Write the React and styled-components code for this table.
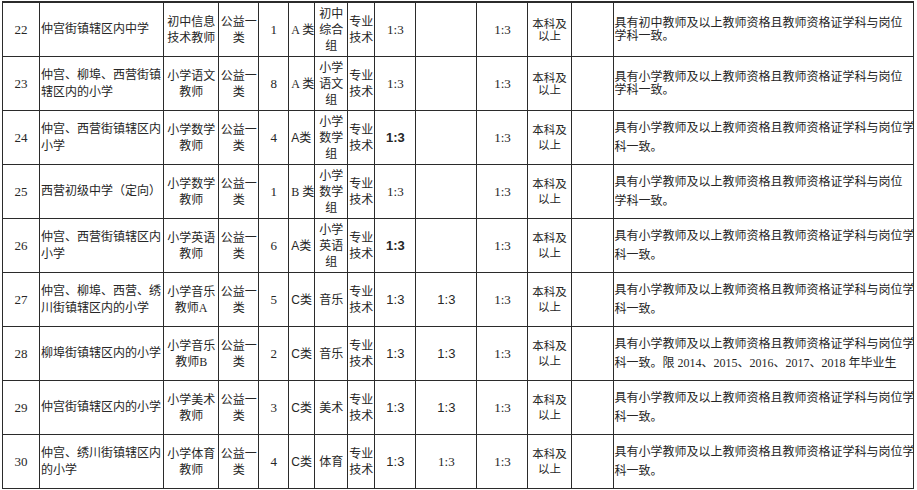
import React from 'react'
import styled, { createGlobalStyle } from 'styled-components'

const Global = createGlobalStyle`
  html, body { margin: 0; padding: 0; background: #fff; }
  body { font-family: "Liberation Serif", "Noto Sans CJK SC", serif; color: #222; }
`

const cols = [37, 124, 55, 40, 30, 26, 33, 27, 41, 61, 51, 43, 42, 300]

const rows = [
  { no: 22, unit: ['仲宫街镇辖区内中学'], post: ['初中信息', '技术教师'], count: '1', cls: 'A 类', group: ['初中', '综合', '组'], r1: '1:3', r2: '', r3: '1:3', req: ['具有初中教师及以上教师资格且教师资格证学科与岗位', '学科一致。'], tight: true },
  { no: 23, unit: ['仲宫、柳埠、西营街镇', '辖区内的小学'], post: ['小学语文', '教师'], count: '8', cls: 'A 类', group: ['小学', '语文', '组'], r1: '1:3', r2: '', r3: '1:3', req: ['具有小学教师及以上教师资格且教师资格证学科与岗位', '学科一致。'], tight: true },
  { no: 24, unit: ['仲宫、西营街镇辖区内', '小学'], post: ['小学数学', '教师'], count: '4', cls: 'A类', clsSans: true, group: ['小学', '数学', '组'], r1: '1:3', r1Sans: true, r1Bold: true, r2: '', r3: '1:3', req: ['具有小学教师及以上教师资格且教师资格证学科与岗位学', '科一致。'] },
  { no: 25, unit: ['西营初级中学（定向）'], post: ['小学数学', '教师'], count: '1', cls: 'B 类', group: ['小学', '数学', '组'], r1: '1:3', r2: '', r3: '1:3', req: ['具有小学教师及以上教师资格且教师资格证学科与岗位', '学科一致。'] },
  { no: 26, unit: ['仲宫、西营街镇辖区内', '小学'], post: ['小学英语', '教师'], count: '6', cls: 'A类', clsSans: true, group: ['小学', '英语', '组'], r1: '1:3', r1Sans: true, r1Bold: true, r2: '', r3: '1:3', req: ['具有小学教师及以上教师资格且教师资格证学科与岗位学', '科一致。'] },
  { no: 27, unit: ['仲宫、柳埠、西营、绣', '川街镇辖区内的小学'], post: ['小学音乐', '教师A'], count: '5', cls: 'C类', clsSans: true, group: ['音乐'], r1: '1:3', r1Sans: true, r2: '1:3', r2Sans: true, r3: '1:3', req: ['具有小学教师及以上教师资格且教师资格证学科与岗位学', '科一致。'] },
  { no: 28, unit: ['柳埠街镇辖区内的小学'], post: ['小学音乐', '教师B'], count: '2', cls: 'C类', clsSans: true, group: ['音乐'], r1: '1:3', r1Sans: true, r2: '1:3', r2Sans: true, r3: '1:3', req: ['具有小学教师及以上教师资格且教师资格证学科与岗位学', '科一致。限 2014、2015、2016、2017、2018 年毕业生'] },
  { no: 29, unit: ['仲宫街镇辖区内的小学'], post: ['小学美术', '教师'], count: '3', cls: 'C类', clsSans: true, group: ['美术'], r1: '1:3', r1Sans: true, r2: '1:3', r2Sans: true, r3: '1:3', req: ['具有小学教师及以上教师资格且教师资格证学科与岗位学', '科一致。'] },
  { no: 30, unit: ['仲宫、绣川街镇辖区内', '的小学'], post: ['小学体育', '教师'], count: '4', cls: 'C类', clsSans: true, group: ['体育'], r1: '1:3', r1Sans: true, r2: '1:3', r3: '1:3', req: ['具有小学教师及以上教师资格且教师资格证学科与岗位学', '科一致。'] },
]

const Page = styled.div`
  padding: 1px 4px 0 2px;
  width: 917px;
  height: 490px;
  box-sizing: border-box;
  overflow: hidden;
`

const Sheet = styled.table`
  border-collapse: collapse;
  table-layout: fixed;
  width: 912px;
`

const Row = styled.tr`
  height: ${p => p.$h}px;
`

const Cell = styled.td`
  border: 1.6px solid #2b2b2b;
  padding: 0 ${p => p.$pad ?? 1}px;
  text-align: ${p => p.$align || 'center'};
  vertical-align: middle;
  font-size: ${p => p.$size || 12}px;
  line-height: ${p => p.$lh || 16}px;
  font-family: ${p => p.$sans ? '"Liberation Sans", "Noto Sans CJK SC", sans-serif' : '"Liberation Serif", "Noto Sans CJK SC", serif'};
  font-weight: ${p => p.$bold ? 'bold' : 'normal'};
  white-space: nowrap;
  overflow: hidden;
  color: #262626;
`

const Lines = ({ items }) => items.map((t, i) => (
  <React.Fragment key={i}>{i > 0 && <br />}{t}</React.Fragment>
))

export default function App() {
  return (
    <Page>
      <Global />
      <Sheet>
        <colgroup>
          {cols.map((w, i) => <col key={i} style={{ width: w }} />)}
        </colgroup>
        <tbody>
          <Row $h={1}>
            {cols.map((_, i) => <Cell key={i} $lh={1} />)}
          </Row>
          {rows.map(r => (
            <Row key={r.no} $h={54}>
              <Cell $size={13}>{r.no}</Cell>
              <Cell $align="left" $lh={17}><Lines items={r.unit} /></Cell>
              <Cell $lh={16}><Lines items={r.post} /></Cell>
              <Cell $lh={16}>公益一<br />类</Cell>
              <Cell $size={13}>{r.count}</Cell>
              <Cell $align="left" $pad={2} $sans={r.clsSans}>{r.cls}</Cell>
              <Cell $lh={16}><Lines items={r.group} /></Cell>
              <Cell $align="left" $lh={16}>专业<br />技术</Cell>
              <Cell $size={13} $sans={r.r1Sans} $bold={r.r1Bold}>{r.r1}</Cell>
              <Cell $size={13} $sans={r.r2Sans}>{r.r2}</Cell>
              <Cell $size={13}>{r.r3}</Cell>
              <Cell $size={11.5} $lh={r.tight ? 12 : 15}>本科及<br />以上</Cell>
              <Cell />
              <Cell $align="left" $lh={r.tight ? 12.5 : 19}><Lines items={r.req} /></Cell>
            </Row>
          ))}
        </tbody>
      </Sheet>
    </Page>
  )
}
